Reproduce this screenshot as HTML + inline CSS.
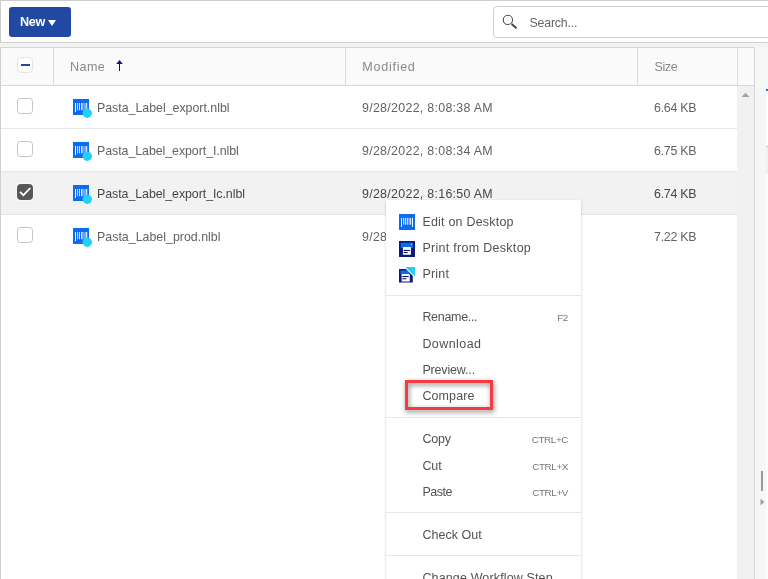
<!DOCTYPE html>
<html><head><meta charset="utf-8">
<style>
*{box-sizing:border-box;margin:0;padding:0}
html,body{width:768px;height:579px;overflow:hidden;background:#fff}
body{font-family:"Liberation Sans","DejaVu Sans",sans-serif;font-size:12.4px;color:#555;position:relative}
.abs{position:absolute}
#toolbar{left:0;top:0;width:768px;height:43px;background:#fff;border-top:1px solid #cecece;border-left:1px solid #cbcbcb;border-bottom:1px solid #d2d2d2}
#gap{left:0;top:43px;width:768px;height:4px;background:#f3f3f3}
#newbtn{left:9px;top:7px;width:62px;height:30px;background:#2149a4;border-radius:3px;color:#fff;font-weight:bold;font-size:12.6px;line-height:31px;padding-left:11px;letter-spacing:-0.3px}
#newbtn i{position:absolute;left:39.3px;top:13.2px;width:0;height:0;border-left:4.5px solid transparent;border-right:4.5px solid transparent;border-top:6px solid #fff}
#search{left:493px;top:6px;width:290px;height:32px;border:1px solid #cfcfcf;border-radius:4px;background:#fff}
#search span{position:absolute;left:35.5px;top:1px;line-height:30px;color:#666;font-size:12.4px;letter-spacing:-0.22px}
#grid{left:0;top:47px;width:755px;height:540px;border-left:1px solid #cfcfcf;border-top:1px solid #d6d6d6;border-right:1px solid #d6d6d6;background:#fff}
#thead{left:0;top:0;width:753px;height:38px;background:#fafafa;border-bottom:1px solid #d8d8d8}
.th{position:absolute;top:0;height:37px;line-height:39px;color:#8a8a8a;font-size:12.6px;border-left:1px solid #dadada}
.row{position:absolute;left:0;width:736px;height:43px;border-bottom:1px solid #e6e6e6;background:#fff;line-height:44px;color:#636363}
.row.sel{background:#f2f2f2;color:#464646}
.row span{position:absolute;top:0;white-space:nowrap}
.cb{position:absolute;left:16px;top:12px;width:16px;height:16px;border:1px solid #c4c4c4;border-radius:3.5px;background:#fff}
.cb.on{background:#575757;border-color:#575757;box-shadow:0 0 0 1px rgba(255,255,255,.55)}
.ico{position:absolute;left:71px;top:13px;width:22px;height:22px}
#vscroll{left:736px;top:38px;width:17px;height:510px;background:#f1f1f1}
#side{left:755px;top:47px;width:13px;height:540px;background:#f6f6f6}
#menu{left:386px;top:200px;width:195px;height:400px;background:#fff;box-shadow:0 1px 3px rgba(0,0,0,.2);border-radius:2px}
.mi{position:absolute;left:36.4px;white-space:nowrap;color:#525252;font-size:12.5px;line-height:16px}
.sc{position:absolute;margin-top:.8px;right:13px;white-space:nowrap;color:#777;font-size:9.9px;line-height:16px}
.sep{position:absolute;left:0;width:195px;height:1px;background:#e6e6e6}
.mic{position:absolute;left:13px;width:16px;height:16px}
</style></head><body>
<div id="wrap" style="position:absolute;left:0;top:0;width:768px;height:579px;will-change:transform">
<div id="toolbar" class="abs"></div>
<div id="gap" class="abs"></div>
<div id="newbtn" class="abs">New<i></i></div>
<div id="search" class="abs">
<svg class="abs" style="left:8px;top:6px" width="17" height="17" viewBox="0 0 17 17"><circle cx="5.9" cy="6.9" r="4.6" fill="none" stroke="#4a4a4a" stroke-width="1.1"/><path d="M9.6 11 L14.5 15.2" stroke="#444" stroke-width="2"/></svg>
<span>Search...</span></div>

<div id="grid" class="abs">
 <div id="thead" class="abs">
  <div class="abs" style="left:16px;top:9px;width:16px;height:16px;border:1px solid #e4e4e4;border-radius:4px;background:#fff"><div class="abs" style="left:2.6px;top:5.9px;width:9.2px;height:2.2px;background:#2149a4"></div></div>
  <div class="th" style="left:52px;width:292px;padding-left:16px;letter-spacing:0.42px">Name
   <svg class="abs" style="left:60.9px;top:11px" width="9" height="13" viewBox="0 0 9 13"><path d="M4.5 1 L7.8 4.95 L5 4.95 L5 12 L4 12 L4 4.95 L1.2 4.95 Z" fill="#10157a"/></svg>
  </div>
  <div class="th" style="left:344px;width:292px;padding-left:16.3px;letter-spacing:0.71px">Modified</div>
  <div class="th" style="left:636px;width:100px;padding-left:16.5px;letter-spacing:-0.42px">Size</div>
  <div class="th" style="left:736px;width:17px"></div>
 </div>
 <div id="vscroll" class="abs"><svg class="abs" style="left:4px;top:6px" width="9" height="6" viewBox="0 0 9 6"><path d="M0.5 5 L4.5 0.8 L8.5 5 Z" fill="#a3a3a3"/></svg></div>

 <div class="row" style="top:38px"><div class="cb"></div>
  <svg class="ico" viewBox="0 0 22 22"><use href="#lbl"/></svg>
  <span style="left:96px;letter-spacing:-0.02px">Pasta_Label_export.nlbl</span><span style="left:361px;letter-spacing:0.30px">9/28/2022, 8:08:38 AM</span><span style="left:653px;letter-spacing:-0.25px">6.64 KB</span></div>
 <div class="row" style="top:81px"><div class="cb"></div>
  <svg class="ico" viewBox="0 0 22 22"><use href="#lbl"/></svg>
  <span style="left:96px;letter-spacing:-0.06px">Pasta_Label_export_I.nlbl</span><span style="left:361px;letter-spacing:0.30px">9/28/2022, 8:08:34 AM</span><span style="left:653px;letter-spacing:-0.25px">6.75 KB</span></div>
 <div class="row sel" style="top:124px"><div class="cb on"><svg class="abs" style="left:0;top:0" width="14" height="14" viewBox="0 0 14 14"><path d="M2.0 6.8 L5.4 10.2 L12.3 3.0" fill="none" stroke="#fff" stroke-width="1.7"/></svg></div>
  <svg class="ico" viewBox="0 0 22 22"><use href="#lbl"/></svg>
  <span style="left:96px;letter-spacing:-0.06px">Pasta_Label_export_Ic.nlbl</span><span style="left:361px;letter-spacing:0.30px">9/28/2022, 8:16:50 AM</span><span style="left:653px;letter-spacing:-0.25px">6.74 KB</span></div>
 <div class="row" style="top:167px;border-bottom:none"><div class="cb"></div>
  <svg class="ico" viewBox="0 0 22 22"><use href="#lbl"/></svg>
  <span style="left:96px;letter-spacing:0.01px">Pasta_Label_prod.nlbl</span><span style="left:361px;letter-spacing:0.30px">9/28/2022, 8:16:50 AM</span><span style="left:653px;letter-spacing:-0.25px">7.22 KB</span></div>
</div>
<div id="side" class="abs">
 <div class="abs" style="left:11px;top:42px;width:2px;height:2px;background:#1a73e8"></div>
 <div class="abs" style="left:11px;top:44px;width:2px;height:55px;background:#fff"></div>
 <div class="abs" style="left:11px;top:100px;width:2px;height:27px;background:#f0f0f0"></div>
 <div class="abs" style="left:11px;top:127px;width:2px;height:420px;background:#fcfcfc"></div>
 <div class="abs" style="left:11px;top:99px;width:2px;height:1px;background:#ccc"></div>
 <div class="abs" style="left:6px;top:424px;width:2px;height:20px;background:#9a9a9a"></div>
 <svg class="abs" style="left:5px;top:451px" width="5" height="8" viewBox="0 0 5 8"><path d="M0.5 0.8 L4.5 4 L0.5 7.2 Z" fill="#a0a0a0"/></svg>
</div>

<svg width="0" height="0" style="position:absolute"><defs>
 <g id="lbl"><rect x="1" y="0" width="16" height="16" fill="#0b6cf0"/>
 <g fill="#fff"><rect x="3" y="4" width="1" height="9"/><rect x="5.3" y="4" width="0.8" height="7.3"/><rect x="7.2" y="4" width="0.8" height="7.3"/><rect x="9" y="4" width="0.8" height="7.3"/><rect x="10.5" y="4" width="0.8" height="7.3"/><rect x="12.6" y="4" width="0.8" height="7.3"/><rect x="14.2" y="4" width="1" height="9"/></g>
 <circle cx="15.3" cy="14.3" r="4.7" fill="#22d1fa"/></g>
</defs></svg>

<div id="menu" class="abs">
 <svg class="mic" style="top:14px" viewBox="0 0 16 16"><rect width="16" height="16" fill="#0b6cf0"/><g fill="#fff"><rect x="2" y="3.9" width="1" height="8.9"/><rect x="4.1" y="3.9" width="0.7" height="6.8"/><rect x="5.8" y="3.9" width="1" height="6.8"/><rect x="7.8" y="3.9" width="1" height="6.8"/><rect x="9.7" y="3.9" width="0.7" height="6.8"/><rect x="11.2" y="3.9" width="0.9" height="6.8"/><rect x="13" y="3.9" width="1" height="8.9"/></g></svg>
 <svg class="mic" style="top:41px" viewBox="0 0 16 16"><rect width="16" height="16" fill="#0e1a78"/><rect x="1.7" y="1.7" width="12.3" height="5.5" fill="#0b6cf0"/><rect x="11.9" y="2.8" width="0.9" height="0.9" fill="#fff"/><rect x="3.9" y="6.1" width="8" height="7.7" rx="0.6" fill="#fff"/><rect x="4.7" y="8.9" width="6.2" height="1.1" fill="#0e1a78"/><rect x="4.7" y="11" width="4" height="1.1" fill="#0e1a78"/></svg>
 <svg class="mic" style="top:67px" viewBox="0 0 16 16"><rect x="0" y="2" width="13.8" height="13.5" fill="#0e1a78"/><rect x="1.5" y="3.4" width="9" height="4" fill="#0b6cf0"/><rect x="2.6" y="6.9" width="8.2" height="7.5" rx="0.6" fill="#fff"/><rect x="3.3" y="9" width="6.3" height="1.1" fill="#0e1a78"/><rect x="3.3" y="11.2" width="4.1" height="1.1" fill="#0e1a78"/><path d="M5 0 L16 0 L16 11 Z" fill="#fff"/><path d="M6.4 0 L16 0 L16 9.5 Z" fill="#22d1fa"/></svg>
 <div class="mi" style="top:14px;letter-spacing:0.21px">Edit on Desktop</div>
 <div class="mi" style="top:40px;letter-spacing:0.29px">Print from Desktop</div>
 <div class="mi" style="top:66px;letter-spacing:0.19px">Print</div>
 <div class="sep" style="top:95px"></div>
 <div class="mi" style="top:109px;letter-spacing:-0.31px">Rename...</div><div class="sc" style="top:109px;letter-spacing:-0.35px">F2</div>
 <div class="mi" style="top:136px;letter-spacing:0.43px">Download</div>
 <div class="mi" style="top:162px;letter-spacing:-0.16px">Preview...</div>
 <div class="abs" style="left:19px;top:180px;width:88px;height:30px;border:3px solid #f63a3f;filter:drop-shadow(1px 2.5px 2.5px rgba(0,0,0,.5))"></div>
 <div class="mi" style="top:188px;letter-spacing:0.10px">Compare</div>
 <div class="sep" style="top:217px"></div>
 <div class="mi" style="top:231px;letter-spacing:-0.17px">Copy</div><div class="sc" style="top:231px;letter-spacing:-0.40px">CTRL+C</div>
 <div class="mi" style="top:258px;letter-spacing:-0.12px">Cut</div><div class="sc" style="top:258px;letter-spacing:-0.40px">CTRL+X</div>
 <div class="mi" style="top:284px;letter-spacing:-0.50px">Paste</div><div class="sc" style="top:284px;letter-spacing:-0.40px">CTRL+V</div>
 <div class="sep" style="top:312px"></div>
 <div class="mi" style="top:327px;letter-spacing:0.03px">Check Out</div>
 <div class="sep" style="top:355px"></div>
 <div class="mi" style="top:370px;letter-spacing:0.14px">Change Workflow Step</div>
</div>
</div>
</body></html>
